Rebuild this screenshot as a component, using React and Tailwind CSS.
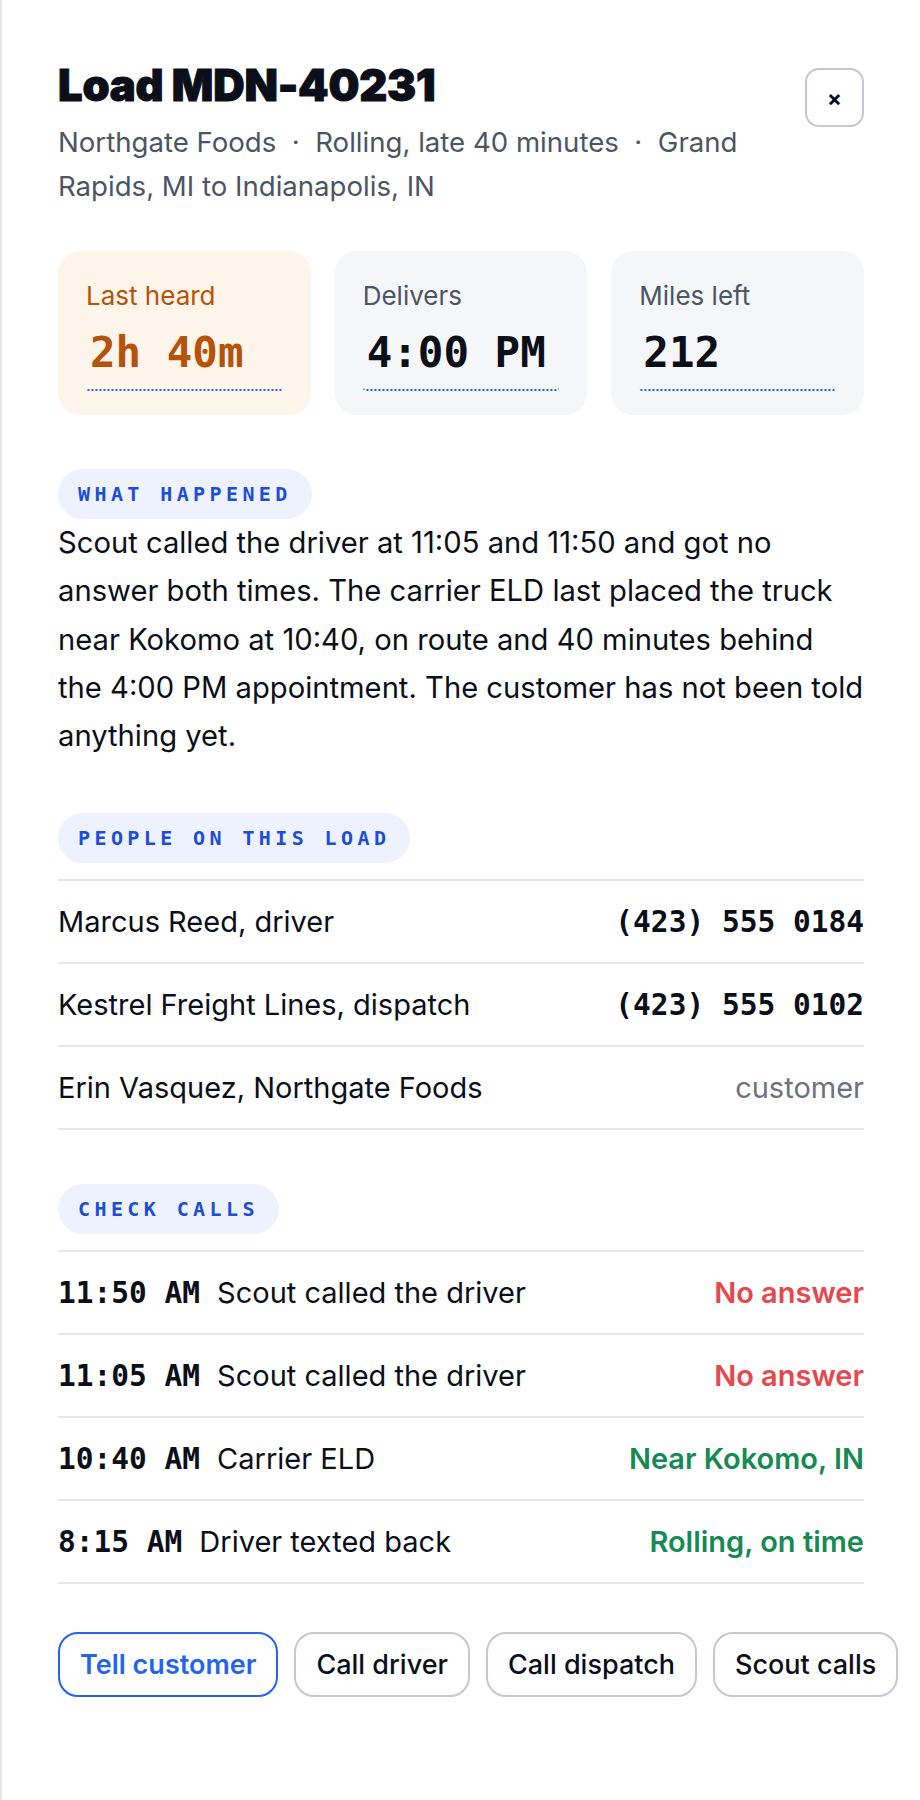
import React from "react";

const sans = "font-['Inter','Noto_Sans',sans-serif]";
const mono = "font-['DejaVu_Sans_Mono','Liberation_Mono',monospace]";

const stats = [
  { label: "Last heard", value: "2h 40m", warm: true },
  { label: "Delivers", value: "4:00 PM" },
  { label: "Miles left", value: "212" },
];

const people = [
  { name: "Marcus Reed, driver", phone: "(423) 555 0184" },
  { name: "Kestrel Freight Lines, dispatch", phone: "(423) 555 0102" },
  { name: "Erin Vasquez, Northgate Foods", note: "customer" },
];

const calls = [
  { time: "11:50 AM", what: "Scout called the driver", result: "No answer", bad: true },
  { time: "11:05 AM", what: "Scout called the driver", result: "No answer", bad: true },
  { time: "10:40 AM", what: "Carrier ELD", result: "Near Kokomo, IN" },
  { time: "8:15 AM", what: "Driver texted back", result: "Rolling, on time" },
];

const Pill = ({ children, className = "" }) => (
  <div className={`w-fit rounded-full bg-[#eef2fe] px-5 py-3 ${mono} text-[20px] leading-[26px] font-bold tracking-[0.22em] text-[#1d4ed8] ${className}`}>
    {children}
  </div>
);

export default function App() {
  return (
    <div className={`min-h-[1800px] border-l-2 border-[#e5e7eb] bg-white px-[56px] pt-[60px] ${sans} text-[#0b0f1a]`}>
      {/* header */}
      <div className="flex items-start justify-between gap-6">
        <div className="flex-1">
          <h1 className="text-[43.5px] leading-[50px] font-black tracking-[-0.005em] [-webkit-text-stroke:1px_#0b0f1a]">
            Load MDN-40231
          </h1>
          <p className="mt-[10px] text-[27.6px] leading-[44px] text-[#4b5563]">
            {"Northgate Foods\u00a0 ·\u00a0 Rolling, late 40 minutes\u00a0 ·\u00a0 Grand Rapids, MI to Indianapolis, IN"}
          </p>
        </div>
        <button className="mt-2 flex h-[59px] w-[59px] shrink-0 items-center justify-center rounded-[14px] border-2 border-[#c5c8d2] text-[22px] font-bold leading-none">
          ×
        </button>
      </div>

      {/* stats */}
      <div className="mt-[43px] grid grid-cols-3 gap-6">
        {stats.map((s) => (
          <div
            key={s.label}
            className={`rounded-[22px] px-[28px] pt-[26px] pb-[24px] ${s.warm ? "bg-[#fdf5ea]" : "bg-[#f5f6f8]"}`}
          >
            <div className={`text-[26px] leading-[38px] ${s.warm ? "text-[#b45309]" : "text-[#4b5563]"}`}>
              {s.label}
            </div>
            <div
              className={`mt-3 rounded-[3px] border-b-2 border-dotted border-[#2563eb] pb-[10px] pl-1 ${mono} text-[42.5px] leading-[52px] font-bold ${
                s.warm ? "text-[#b45309]" : "text-[#0b0f1a]"
              }`}
            >
              {s.value}
            </div>
          </div>
        ))}
      </div>

      {/* what happened */}
      <Pill className="mt-[54px]">WHAT HAPPENED</Pill>
      <p className="text-[29.2px] leading-[48.3px]">
        Scout called the driver at 11:05 and 11:50 and got no answer both times. The carrier ELD last placed the
        truck near Kokomo at 10:40, on route and 40 minutes behind the 4:00 PM appointment. The customer has not
        been told anything yet.
      </p>

      {/* people */}
      <Pill className="mt-[53px]">PEOPLE ON THIS LOAD</Pill>
      <div className="mt-4 border-t-2 border-[#e5e7eb]">
        {people.map((p) => (
          <div key={p.name} className="flex h-[83px] items-center justify-between border-b-2 border-[#e5e7eb] text-[29px]">
            <span>{p.name}</span>
            {p.phone ? (
              <span className={`${mono} text-[29.5px] font-bold`}>{p.phone}</span>
            ) : (
              <span className="text-[#6b7280]">{p.note}</span>
            )}
          </div>
        ))}
      </div>

      {/* check calls */}
      <Pill className="mt-[54px]">CHECK CALLS</Pill>
      <div className="mt-4 border-t-2 border-[#e5e7eb]">
        {calls.map((c) => (
          <div key={c.time} className="flex h-[83px] items-center justify-between border-b-2 border-[#e5e7eb] text-[29px]">
            <div className="flex items-center gap-[17px]">
              <span className={`${mono} text-[29.5px] font-bold`}>{c.time}</span>
              <span>{c.what}</span>
            </div>
            <span className={`font-semibold ${c.bad ? "text-[#e5484d]" : "text-[#178a53]"}`}>{c.result}</span>
          </div>
        ))}
      </div>

      {/* actions */}
      <div className="mt-[48px] flex gap-4 whitespace-nowrap text-[27px]">
        <button className="h-[65px] rounded-[20px] border-2 border-[#2563eb] px-5 font-semibold text-[#2563eb]">
          Tell customer
        </button>
        <button className="h-[65px] rounded-[20px] border-2 border-[#c5c8d2] px-5 font-medium">Call driver</button>
        <button className="h-[65px] rounded-[20px] border-2 border-[#c5c8d2] px-5 font-medium">Call dispatch</button>
        <button className="h-[65px] rounded-[20px] border-2 border-[#c5c8d2] px-5 font-medium">Scout calls</button>
      </div>
    </div>
  );
}
